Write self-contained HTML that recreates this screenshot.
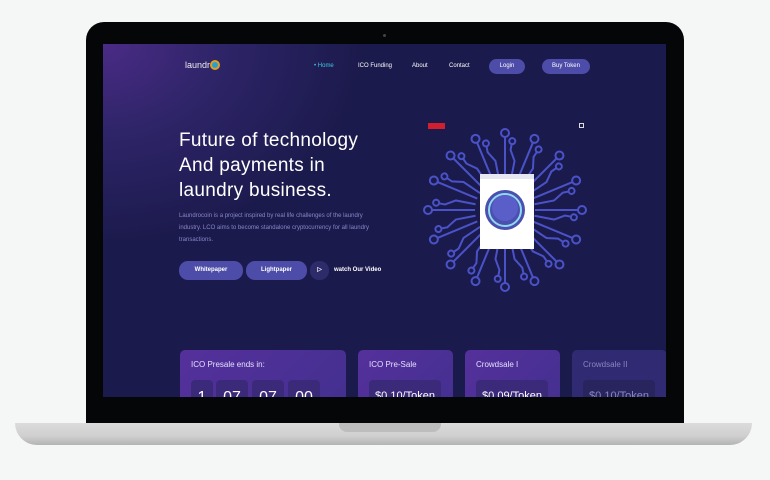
<!DOCTYPE html>
<html><head><meta charset="utf-8"><style>
*{margin:0;padding:0;box-sizing:border-box}
body{width:770px;height:480px;background:#f5f6f6;position:relative;overflow:hidden;font-family:"Liberation Sans",sans-serif}
.bez{position:absolute;left:86px;top:22px;width:598px;height:402px;background:#050607;border-radius:18px 18px 0 0}
.scr{position:absolute;left:103px;top:44px;width:563px;height:353px;overflow:hidden;
background:radial-gradient(ellipse 260px 200px at 0 0,#4a2b86 0%,#2e2468 45%,rgba(27,26,74,0) 100%),#1b1a4c}
.cam{position:absolute;left:383px;top:34px;width:3px;height:3px;border-radius:50%;background:#444}
.base{position:absolute;left:15px;top:423px;width:737px;height:22px;background:linear-gradient(#dcdcdc,#cfcfcf 60%,#b3b3b3);border-radius:0 0 30px 30px}
.notch{position:absolute;left:339px;top:423px;width:102px;height:9px;background:#bdbdbd;border-radius:0 0 8px 8px}
.t{position:absolute;color:#fff;white-space:nowrap}
.nav{font-size:6px;top:19px}
.btn{position:absolute;background:#4d4ca8;border-radius:9px;color:#fff;font-size:6px;text-align:center;font-weight:bold}
h1{position:absolute;color:#fff;font-size:19px;font-weight:normal;line-height:25px;letter-spacing:.3px}
.p{position:absolute;color:#8a86c9;font-size:6px;line-height:12px;width:205px}
.card{position:absolute;top:306px;height:60px;border-radius:5px;background:linear-gradient(135deg,#55309c,#43308f)}
.card .h{position:absolute;left:11px;top:10px;color:#e6e0ff;font-size:8px}
.box{position:absolute;top:30px;height:30px;background:#3b2a7a;border-radius:4px;color:#fff;font-size:16px;text-align:center;padding-top:9px}
</style></head><body>
<div class="bez"></div>
<div class="cam"></div>
<div class="scr">
 <div class="t" style="left:82px;top:16px;font-size:9px;color:#eee">laundr<span style="display:inline-block;width:10px;height:10px;border-radius:50%;border:2px solid #e0a020;background:#2aa0d0;vertical-align:-2px"></span></div>
 <div class="t nav" style="left:211px;color:#3cc6e0">• Home</div>
 <div class="t nav" style="left:255px">ICO Funding</div>
 <div class="t nav" style="left:309px">About</div>
 <div class="t nav" style="left:346px">Contact</div>
 <div class="btn" style="left:386px;top:15px;width:36px;height:15px;line-height:15px;font-weight:normal">Login</div>
 <div class="btn" style="left:439px;top:15px;width:48px;height:15px;line-height:15px;font-weight:normal">Buy Token</div>
 <h1 style="left:76px;top:84px">Future of technology<br>And payments in<br>laundry business.</h1>
 <div class="p" style="left:76px;top:166px">Laundrocoin is a project inspired by real life challenges of the laundry industry. LCO aims to become standalone cryptocurrency for all laundry transactions.</div>
 <div class="btn" style="left:76px;top:217px;width:64px;height:19px;line-height:19px">Whitepaper</div>
 <div class="btn" style="left:143px;top:217px;width:61px;height:19px;line-height:19px">Lightpaper</div>
 <div class="btn" style="left:207px;top:217px;width:19px;height:19px;line-height:19px;background:#2d2b6a;font-size:6px">▷</div>
 <div class="t" style="left:231px;top:223px;font-size:6px;font-weight:bold">watch Our Video</div>
 <div style="position:absolute;left:325px;top:79px;width:17px;height:6px;background:#d02030"></div>
 <div style="position:absolute;left:476px;top:79px;width:5px;height:5px;border:1px solid #ddd"></div>
 <svg style="position:absolute;left:0;top:0" width="563" height="353">
  <defs>
   <g id="s" stroke="#4a52c8" stroke-width="2" fill="none">
    <line x1="432" y1="166" x2="475" y2="166"/><circle cx="479" cy="166" r="4"/>
   </g>
   <g id="s2" stroke="#4a52c8" stroke-width="2" fill="none">
    <polyline points="432,166 452,166 462,160 468,160"/><circle cx="471" cy="160" r="3"/>
   </g>
  </defs>
  <use href="#s" transform="rotate(0 402 166)"/><use href="#s2" transform="rotate(11 402 166)"/>
  <use href="#s" transform="rotate(22.5 402 166)"/><use href="#s2" transform="rotate(34 402 166)"/>
  <use href="#s" transform="rotate(45 402 166)"/><use href="#s2" transform="rotate(56 402 166)"/>
  <use href="#s" transform="rotate(67.5 402 166)"/><use href="#s2" transform="rotate(79 402 166)"/>
  <use href="#s" transform="rotate(90 402 166)"/><use href="#s2" transform="rotate(101 402 166)"/>
  <use href="#s" transform="rotate(112.5 402 166)"/><use href="#s2" transform="rotate(124 402 166)"/>
  <use href="#s" transform="rotate(135 402 166)"/><use href="#s2" transform="rotate(146 402 166)"/>
  <use href="#s" transform="rotate(157.5 402 166)"/><use href="#s2" transform="rotate(169 402 166)"/>
  <use href="#s" transform="rotate(180 402 166)"/><use href="#s2" transform="rotate(191 402 166)"/>
  <use href="#s" transform="rotate(202.5 402 166)"/><use href="#s2" transform="rotate(214 402 166)"/>
  <use href="#s" transform="rotate(225 402 166)"/><use href="#s2" transform="rotate(236 402 166)"/>
  <use href="#s" transform="rotate(247.5 402 166)"/><use href="#s2" transform="rotate(259 402 166)"/>
  <use href="#s" transform="rotate(270 402 166)"/><use href="#s2" transform="rotate(281 402 166)"/>
  <use href="#s" transform="rotate(292.5 402 166)"/><use href="#s2" transform="rotate(304 402 166)"/>
  <use href="#s" transform="rotate(315 402 166)"/><use href="#s2" transform="rotate(326 402 166)"/>
  <use href="#s" transform="rotate(337.5 402 166)"/><use href="#s2" transform="rotate(349 402 166)"/>
  <rect x="377" y="130" width="54" height="7" fill="#e6e6f2"/>
  <rect x="377" y="135" width="54" height="70" fill="#fff"/>
  <circle cx="402" cy="166" r="20" fill="#4b4fae"/>
  <circle cx="402" cy="166" r="16" fill="none" stroke="#8fd8f0" stroke-width="2"/>
  <circle cx="402" cy="164" r="13" fill="#5a5ec8"/>
 </svg>
 <div class="card" style="left:77px;width:166px"><div class="h">ICO Presale ends in:</div>
  <div class="box" style="left:11px;width:22px">1</div><div class="box" style="left:36px;width:32px">07</div><div class="box" style="left:72px;width:32px">07</div><div class="box" style="left:108px;width:32px">00</div></div>
 <div class="card" style="left:255px;width:95px"><div class="h">ICO Pre-Sale</div><div class="box" style="left:11px;width:72px;font-size:11px;padding-top:10px">$0.10/Token</div></div>
 <div class="card" style="left:362px;width:95px"><div class="h">Crowdsale I</div><div class="box" style="left:11px;width:72px;font-size:11px;padding-top:10px">$0.09/Token</div></div>
 <div class="card" style="left:469px;width:95px;background:#2f2a72"><div class="h" style="color:#8a86c0">Crowdsale II</div><div class="box" style="left:11px;width:72px;font-size:11px;padding-top:10px;background:#28245e;color:#8a86c0">$0.10/Token</div></div>
</div>
<div class="base"></div>
<div class="notch"></div>
</body></html>
